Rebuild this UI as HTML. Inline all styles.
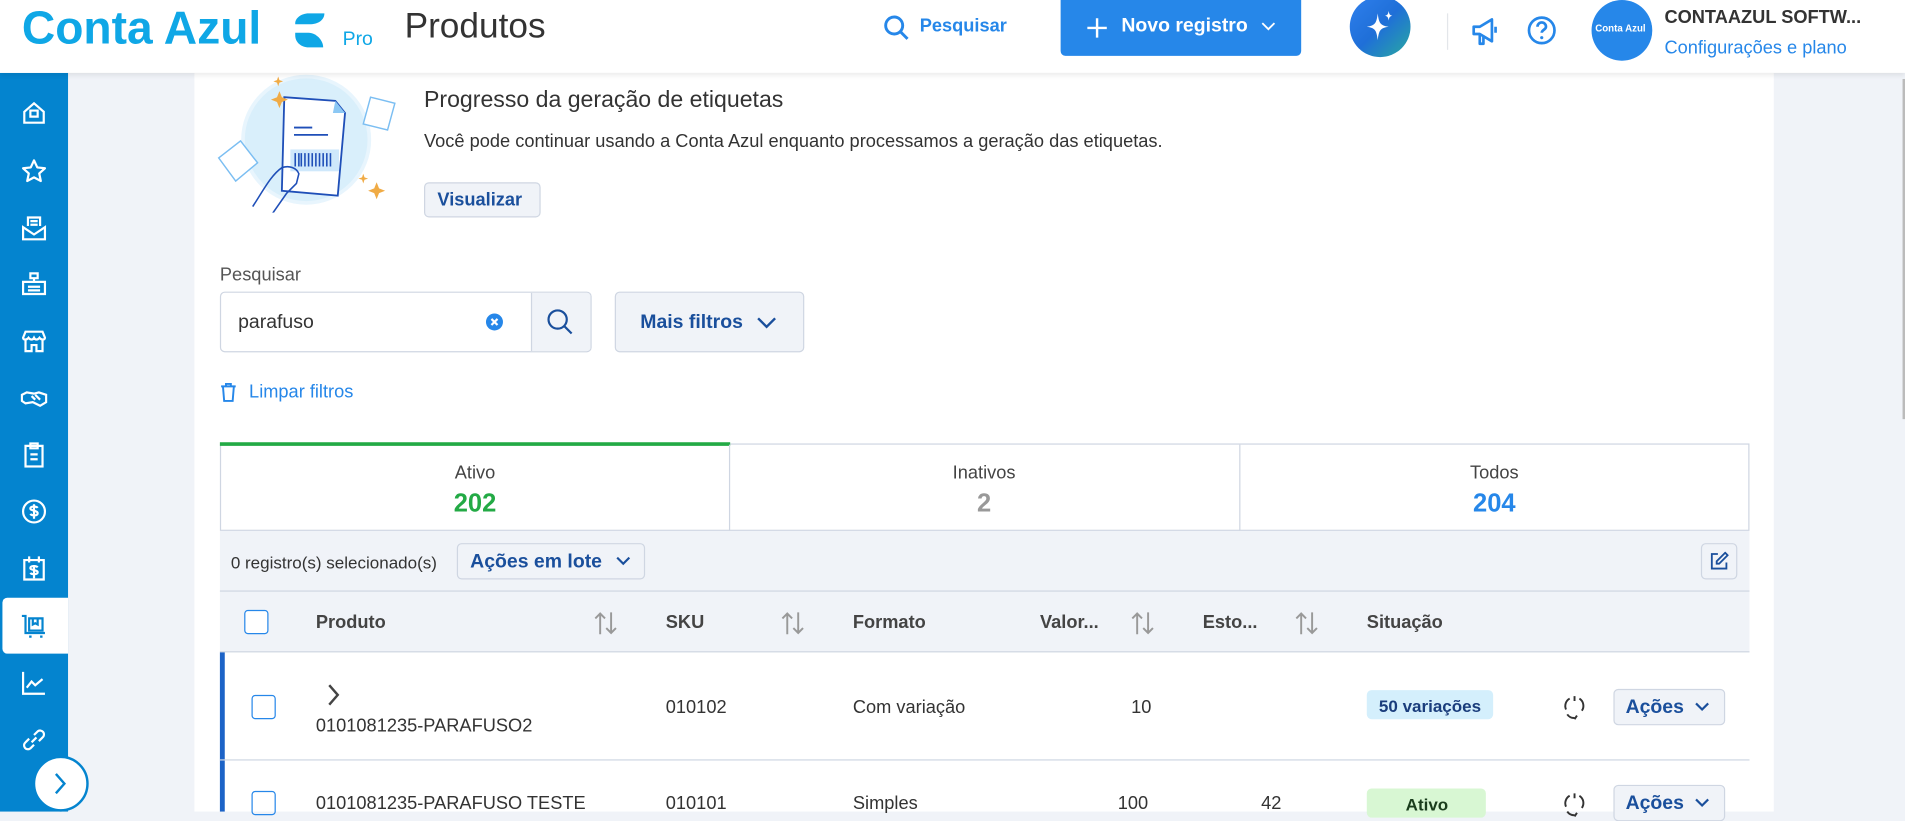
<!DOCTYPE html>
<html><head><meta charset="utf-8">
<style>
html,body{margin:0;padding:0;width:1905px;height:811px;overflow:hidden;background:#f0f3f8}
#w{position:absolute;left:0;top:0;width:1568px;height:668px;transform:scale(1.21492);transform-origin:0 0;font-family:"Liberation Sans",sans-serif;color:#333;background:#f0f3f8}
.a{position:absolute}
.t{position:absolute;white-space:nowrap}
.btn{position:absolute;background:#f0f3f8;border:1px solid #cfd6e2;border-radius:4px;box-sizing:border-box}
.sb svg{position:absolute;left:17px}
.hd{font-weight:bold;font-size:15px;color:#444;top:504px}
</style></head><body><div id="w">
<!-- header -->
<div class="a" style="left:0;top:0;width:1568px;height:60px;background:#fff;box-shadow:0 2px 4px rgba(0,0,0,.08);z-index:2">
 <div class="t" style="left:18px;top:3px;font-size:38px;font-weight:bold;color:#0fa7e6;letter-spacing:0px">Conta Azul</div>
 <svg class="a" style="left:240px;top:9px" width="28" height="32" viewBox="0 0 28 32"><path d="M27 2H14C8 2 3 6 3 10v1h12c6 0 12-3 12-9z" fill="#0fa7e6"/><path d="M3 18v2c0 6 5 10 11 10h12c0-6-6-12-12-12z" fill="#0fa7e6"/></svg>
 <div class="t" style="left:282px;top:24px;font-size:16px;color:#0fa7e6">Pro</div>
 <div class="t" style="left:333px;top:6px;font-size:29px;color:#333">Produtos</div>
 <svg class="a" style="left:727px;top:12px" width="22" height="22" viewBox="0 0 22 22"><circle cx="9" cy="9" r="7" fill="none" stroke="#2687e9" stroke-width="2.4"/><path d="M14 14l6 6" stroke="#2687e9" stroke-width="2.4"/></svg>
 <div class="t" style="left:757px;top:13px;font-size:15px;font-weight:bold;color:#2687e9">Pesquisar</div>
 <div class="a" style="left:873px;top:0;width:198px;height:46px;background:#2687e9;border-radius:0 0 4px 4px"></div>
 <svg class="a" style="left:894px;top:14px" width="18" height="18"><path d="M9 1v16M1 9h16" stroke="#fff" stroke-width="2"/></svg>
 <div class="t" style="left:923px;top:13px;font-size:16px;font-weight:bold;color:#fff">Novo registro</div>
 <svg class="a" style="left:1038px;top:17px" width="12" height="10"><path d="M1 2l5 5 5-5" fill="none" stroke="#fff" stroke-width="1.5"/></svg>
 <div class="a" style="left:1111px;top:-3px;width:50px;height:50px;border-radius:50%;background:linear-gradient(135deg,#2f80ed,#1f6fd8 50%,#29a9a0)"></div>
 <svg class="a" style="left:1122px;top:7px" width="28" height="28" viewBox="0 0 28 28"><path d="M12 4C13 12 14 14 21 15 14 16 13 18 12 26 11 18 10 16 3 15 10 14 11 12 12 4z" fill="#fff"/><path d="M21 2c.5 3 1 3.5 3 4-2 .5-2.5 1-3 4-.5-3-1-3.5-3-4 2-.5 2.5-1 3-4z" fill="#fff"/></svg>
 <div class="a" style="left:1191px;top:11px;width:1px;height:30px;background:#e3e6ea"></div>
 <svg class="a" style="left:1210px;top:13px" width="26" height="26" viewBox="0 0 26 26"><path d="M3 9h5l10-6v18L8 15H3zM8 15v8h3v-7M21 9v5" fill="none" stroke="#2687e9" stroke-width="2.2" stroke-linejoin="round"/></svg>
 <svg class="a" style="left:1256px;top:12px" width="26" height="26" viewBox="0 0 26 26"><circle cx="13" cy="13" r="10.5" fill="none" stroke="#2687e9" stroke-width="2.2"/><path d="M9.5 10a3.5 3.5 0 117 0c0 2.5-3.5 2.5-3.5 5" fill="none" stroke="#2687e9" stroke-width="2.2"/><circle cx="13" cy="19" r="1.3" fill="#2687e9"/></svg>
 <div class="a" style="left:1310px;top:0;width:50px;height:50px;border-radius:50%;background:#2687e9"></div>
 <div class="t" style="left:1313px;top:19px;font-size:8px;color:#fff;font-weight:bold">Conta Azul</div>
 <div class="t" style="left:1370px;top:6px;font-size:15px;font-weight:bold;color:#333">CONTAAZUL SOFTW...</div>
 <div class="t" style="left:1370px;top:31px;font-size:15px;color:#2687e9">Configurações e plano</div>
</div>
<!-- sidebar -->
<div class="a sb" style="left:0;top:60px;width:56px;height:608px;background:#0484cf">
 <svg style="top:22px" width="22" height="22" viewBox="0 0 22 22" fill="none" stroke="#fff" stroke-width="1.8"><path d="M3 10l8-7 8 7v9H3zM8 9h6v5H8z"/></svg>
 <svg style="top:70px" width="22" height="22" viewBox="0 0 22 22" fill="none" stroke="#fff" stroke-width="1.8"><path d="M11 2l2.7 5.8 6.3.7-4.7 4.3 1.3 6.2L11 16l-5.6 3 1.3-6.2L2 8.5l6.3-.7z" stroke-linejoin="round"/></svg>
 <svg style="top:117px" width="22" height="22" viewBox="0 0 22 22" fill="none" stroke="#fff" stroke-width="1.8"><path d="M6 9V2h10v7M2 10l9 6 9-6v10H2zM8 5h6M8 8h6"/></svg>
 <svg style="top:163px" width="22" height="22" viewBox="0 0 22 22" fill="none" stroke="#fff" stroke-width="1.8"><path d="M8 2h6v4H8zM11 6v3M2 9h18v10H2zM6 13h10M6 16h10"/></svg>
 <svg style="top:210px" width="22" height="22" viewBox="0 0 22 22" fill="none" stroke="#fff" stroke-width="1.8"><path d="M2 8l2-5h14l2 5c0 2-3 2-4.5 0-1.5 2-3.5 2-4.5 0-1 2-3 2-4.5 0C5 10 2 10 2 8zM4 10v9h5v-5h4v5h5v-9"/></svg>
 <svg style="top:257px" width="22" height="22" viewBox="0 0 22 22" fill="none" stroke="#fff" stroke-width="1.8"><path d="M1 8l4-2 6 1 4-1 6 2v6l-5 3-6-3-6 1-3-2zM9 9l3 3M12 8l4 4"/></svg>
 <svg style="top:303px" width="22" height="22" viewBox="0 0 22 22" fill="none" stroke="#fff" stroke-width="1.8"><path d="M4 4h14v17H4zM8 2h6v4H8zM8 11h6M8 15h6"/></svg>
 <svg style="top:350px" width="22" height="22" viewBox="0 0 22 22" fill="none" stroke="#fff" stroke-width="1.8"><circle cx="11" cy="11" r="9"/><path d="M14 8c-1-1.5-6-1.5-6 .5s6 1.5 6 4-5 2-6 .5M11 5v12"/></svg>
 <svg style="top:397px" width="22" height="22" viewBox="0 0 22 22" fill="none" stroke="#fff" stroke-width="1.8"><path d="M3 4h16v16H3zM7 1v5M15 1v5M14 10c-1-1.5-6-1.5-6 .5s6 1.5 6 3.5-5 2-6 .5M11 8v11"/></svg>
 <div class="a" style="left:2px;top:432px;width:54px;height:46px;background:#fff;border-radius:4px 0 0 4px"></div>
 <svg style="top:444px" width="22" height="22" viewBox="0 0 22 22" fill="none" stroke="#0484cf" stroke-width="1.8"><path d="M1 3h3v14h16M7 5h11v10H7zM10 5v5l2-1 2 1V5M7 20h2M16 20h2"/></svg>
 <svg style="top:491px" width="22" height="22" viewBox="0 0 22 22" fill="none" stroke="#fff" stroke-width="1.8"><path d="M2 2v18h18M5 15l4-5 3 3 6-5"/></svg>
 <svg style="top:538px" width="22" height="22" viewBox="0 0 22 22" fill="none" stroke="#fff" stroke-width="1.8"><path d="M9 13l4-4M7 10l-3 3a3 3 0 004 5l3-3M15 12l3-3a3 3 0 00-4-5l-3 3"/></svg>
</div>
<div class="a" style="left:27px;top:622px;width:46px;height:46px;border-radius:50%;background:#fff;border:2px solid #0484cf;box-sizing:border-box"></div>
<svg class="a" style="left:44px;top:635px" width="12" height="20"><path d="M2 2l7 8-7 8" fill="none" stroke="#0484cf" stroke-width="2"/></svg>
<!-- content -->
<div class="a" style="left:160px;top:60px;width:1300px;height:608px;background:#fff"></div>
<div class="a" style="left:1566px;top:65px;width:2px;height:280px;background:#bbb"></div>
<svg class="a" style="left:172px;top:60px" width="160" height="115" viewBox="0 0 160 115">
 <circle cx="80" cy="55" r="52" fill="#d9effb" stroke="#e8f5fd" stroke-width="3"/>
 <path d="M62 20l42 3 8 10-6 68-46-4z" fill="#fff" stroke="#1f4fb8" stroke-width="1.5"/>
 <path d="M104 23l-2 10 10 0z" fill="#8cc8f4"/>
 <path d="M70 45h15M70 51h28" stroke="#1f4fb8" stroke-width="1.5"/>
 <rect x="67" y="63" width="40" height="18" fill="#cfe8fb"/>
 <path d="M71 66v11M74 66v11M76 66v11M79 66v11M82 66v11M85 66v11M88 66v11M91 66v11M94 66v11M97 66v11M100 66v11" stroke="#1f4fb8" stroke-width="1.3"/>
 <path d="M36 110c8-12 15-26 24-32 6-2 12 0 14 5l-2 8-8 8-14 20" fill="none" stroke="#1f4fb8" stroke-width="1.3"/>
 <path d="M8 70l18-14 14 18-18 15z" fill="#fff" stroke="#7bbef2" stroke-width="1.2"/>
 <path d="M133 20l20 5-6 22-20-5z" fill="#fff" stroke="#7bbef2" stroke-width="1.2"/>
 <path d="M58 15l2 5 5 2-5 2-2 5-2-5-5-2 5-2z" fill="#f0ab45"/>
 <path d="M138 90l2 5 5 2-5 2-2 5-2-5-5-2 5-2z" fill="#f0ab45"/>
 <path d="M57 3l1 3 3 1-3 1-1 3-1-3-3-1 3-1z" fill="#f0ab45"/>
 <path d="M127 83l1 3 3 1-3 1-1 3-1-3-3-1 3-1z" fill="#f0ab45"/>
</svg>
<div class="t" style="left:349px;top:72px;font-size:19px;color:#333">Progresso da geração de etiquetas</div>
<div class="t" style="left:349px;top:108px;font-size:15px;color:#333">Você pode continuar usando a Conta Azul enquanto processamos a geração das etiquetas.</div>
<div class="btn" style="left:349px;top:150px;width:96px;height:29px"></div>
<div class="t" style="left:360px;top:156px;font-size:15px;font-weight:bold;color:#1a4f9c">Visualizar</div>
<div class="t" style="left:181px;top:218px;font-size:15px;color:#555">Pesquisar</div>
<div class="a" style="left:181px;top:240px;width:306px;height:50px;border:1px solid #cfd6e2;border-radius:4px;box-sizing:border-box;background:#fff;overflow:hidden"><div class="a" style="left:255px;top:0;width:51px;height:50px;background:#f0f3f8;border-left:1px solid #cfd6e2"></div></div>
<div class="t" style="left:196px;top:257px;font-size:16px;color:#333">parafuso</div>
<div class="a" style="left:400px;top:258px;width:14px;height:14px;border-radius:50%;background:#2687e9"></div>
<svg class="a" style="left:400px;top:258px" width="14" height="14"><path d="M4.5 4.5l5 5M9.5 4.5l-5 5" stroke="#fff" stroke-width="1.8"/></svg>
<svg class="a" style="left:449px;top:253px" width="24" height="24"><circle cx="10" cy="10" r="7.5" fill="none" stroke="#1a4f9c" stroke-width="1.8"/><path d="M15.5 15.5l6 6" stroke="#1a4f9c" stroke-width="1.8"/></svg>
<div class="btn" style="left:506px;top:240px;width:156px;height:50px"></div>
<div class="t" style="left:527px;top:257px;font-size:16px;font-weight:bold;color:#1a4f9c">Mais filtros</div>
<svg class="a" style="left:622px;top:259px" width="18" height="14"><path d="M2 3l7 7 7-7" fill="none" stroke="#1a4f9c" stroke-width="2"/></svg>
<svg class="a" style="left:180px;top:314px" width="16" height="18" viewBox="0 0 16 18" fill="none" stroke="#2687e9" stroke-width="1.6"><path d="M2 4h12M6 4V2h4v2M3.5 4l1 12h7l1-12"/></svg>
<div class="t" style="left:205px;top:314px;font-size:15px;color:#2687e9">Limpar filtros</div>
<!-- tabs -->
<div class="a" style="left:181px;top:365px;width:1259px;height:72px;border:1px solid #cfd6e2;box-sizing:border-box"></div>
<div class="a" style="left:181px;top:364px;width:420px;height:3px;background:#23aa45"></div>
<div class="a" style="left:600px;top:366px;width:1px;height:71px;background:#cfd6e2"></div>
<div class="a" style="left:1020px;top:366px;width:1px;height:71px;background:#cfd6e2"></div>
<div class="t" style="left:181px;width:420px;text-align:center;top:381px;font-size:15px;color:#444">Ativo</div>
<div class="t" style="left:181px;width:420px;text-align:center;top:403px;font-size:21px;font-weight:bold;color:#23aa45">202</div>
<div class="t" style="left:600px;width:420px;text-align:center;top:381px;font-size:15px;color:#444">Inativos</div>
<div class="t" style="left:600px;width:420px;text-align:center;top:403px;font-size:21px;font-weight:bold;color:#999">2</div>
<div class="t" style="left:1020px;width:420px;text-align:center;top:381px;font-size:15px;color:#444">Todos</div>
<div class="t" style="left:1020px;width:420px;text-align:center;top:403px;font-size:21px;font-weight:bold;color:#2687e9">204</div>
<!-- toolbar -->
<div class="a" style="left:181px;top:437px;width:1259px;height:100px;background:#f0f3f8;border-bottom:1px solid #cfd6e2;box-sizing:border-box"></div>
<div class="a" style="left:181px;top:486px;width:1259px;height:1px;background:#cfd6e2"></div>
<div class="t" style="left:190px;top:455px;font-size:14px;color:#333">0 registro(s) selecionado(s)</div>
<div class="btn" style="left:376px;top:447px;width:155px;height:30px"></div>
<div class="t" style="left:387px;top:454px;font-size:16px;font-weight:bold;color:#1a4f9c">Ações em lote</div>
<svg class="a" style="left:506px;top:457px" width="14" height="10"><path d="M2 2l5 5 5-5" fill="none" stroke="#1a4f9c" stroke-width="1.8"/></svg>
<div class="btn" style="left:1400px;top:447px;width:30px;height:30px"></div>
<svg class="a" style="left:1407px;top:454px" width="16" height="16" viewBox="0 0 16 16" fill="none" stroke="#1a4f9c" stroke-width="1.5"><path d="M7 2H2v12h12V9M13 1l2 2-7 7H6V8z"/></svg>
<!-- header row -->
<div class="a" style="left:201px;top:502px;width:18px;height:18px;border:1.5px solid #2687e9;border-radius:3px;background:#fff"></div>
<div class="t hd" style="left:260px">Produto</div>
<div class="t hd" style="left:548px">SKU</div>
<div class="t hd" style="left:702px">Formato</div>
<div class="t hd" style="left:856px">Valor...</div>
<div class="t hd" style="left:990px">Esto...</div>
<div class="t hd" style="left:1125px">Situação</div>
<svg class="a" style="left:488px;top:502px" width="22" height="22"><path d="M6 20V3M2 7l4-4 4 4M15 2v17M11 15l4 4 4-4" fill="none" stroke="#999" stroke-width="1.6"/></svg>
<svg class="a" style="left:642px;top:502px" width="22" height="22"><path d="M6 20V3M2 7l4-4 4 4M15 2v17M11 15l4 4 4-4" fill="none" stroke="#999" stroke-width="1.6"/></svg>
<svg class="a" style="left:930px;top:502px" width="22" height="22"><path d="M6 20V3M2 7l4-4 4 4M15 2v17M11 15l4 4 4-4" fill="none" stroke="#999" stroke-width="1.6"/></svg>
<svg class="a" style="left:1065px;top:502px" width="22" height="22"><path d="M6 20V3M2 7l4-4 4 4M15 2v17M11 15l4 4 4-4" fill="none" stroke="#999" stroke-width="1.6"/></svg>
<!-- row 1 -->
<div class="a" style="left:181px;top:537px;width:4px;height:131px;background:#1c63c7"></div>
<div class="a" style="left:181px;top:625px;width:1259px;height:1px;background:#cfd6e2"></div>
<div class="a" style="left:207px;top:572px;width:18px;height:18px;border:1.5px solid #2687e9;border-radius:3px"></div>
<svg class="a" style="left:268px;top:562px" width="14" height="20"><path d="M3 2l7 8-7 8" fill="none" stroke="#444" stroke-width="2"/></svg>
<div class="t" style="left:260px;top:589px;font-size:15px;color:#333">0101081235-PARAFUSO2</div>
<div class="t" style="left:548px;top:574px;font-size:15px;color:#333">010102</div>
<div class="t" style="left:702px;top:574px;font-size:15px;color:#333">Com variação</div>
<div class="t" style="left:931px;top:574px;font-size:15px;color:#333">10</div>
<div class="a" style="left:1125px;top:568px;width:104px;height:24px;background:#d4effc;border-radius:4px"></div>
<div class="t" style="left:1135px;top:573px;font-size:14px;font-weight:bold;color:#1a3d7c">50 variações</div>
<svg class="a" style="left:1286px;top:571px" width="20" height="22" viewBox="0 0 20 22" fill="none" stroke="#333" stroke-width="1.6"><path d="M10 2v4M6 4a7 7 0 00-3 9M4 17a7 7 0 006 3M14 4a7 7 0 012 10M12 18l-2 3"/></svg>
<div class="btn" style="left:1328px;top:567px;width:92px;height:30px"></div>
<div class="t" style="left:1338px;top:574px;font-size:16px;font-weight:bold;color:#1a4f9c">Ações</div>
<svg class="a" style="left:1394px;top:577px" width="14" height="10"><path d="M2 2l5 5 5-5" fill="none" stroke="#1a4f9c" stroke-width="1.8"/></svg>
<!-- row 2 -->
<div class="a" style="left:207px;top:651px;width:18px;height:18px;border:1.5px solid #2687e9;border-radius:3px"></div>
<div class="t" style="left:260px;top:653px;font-size:15px;color:#333">0101081235-PARAFUSO TESTE</div>
<div class="t" style="left:548px;top:653px;font-size:15px;color:#333">010101</div>
<div class="t" style="left:702px;top:653px;font-size:15px;color:#333">Simples</div>
<div class="t" style="left:920px;top:653px;font-size:15px;color:#333">100</div>
<div class="t" style="left:1038px;top:653px;font-size:15px;color:#333">42</div>
<div class="a" style="left:1125px;top:649px;width:98px;height:24px;background:#d8f7d3;border-radius:4px"></div>
<div class="t" style="left:1157px;top:654px;font-size:14px;font-weight:bold;color:#1a3d1c">Ativo</div>
<svg class="a" style="left:1286px;top:651px" width="20" height="22" viewBox="0 0 20 22" fill="none" stroke="#333" stroke-width="1.6"><path d="M10 2v4M6 4a7 7 0 00-3 9M4 17a7 7 0 006 3M14 4a7 7 0 012 10M12 18l-2 3"/></svg>
<div class="btn" style="left:1328px;top:646px;width:92px;height:30px"></div>
<div class="t" style="left:1338px;top:653px;font-size:16px;font-weight:bold;color:#1a4f9c">Ações</div>
<svg class="a" style="left:1394px;top:656px" width="14" height="10"><path d="M2 2l5 5 5-5" fill="none" stroke="#1a4f9c" stroke-width="1.8"/></svg>
</div></body></html>
